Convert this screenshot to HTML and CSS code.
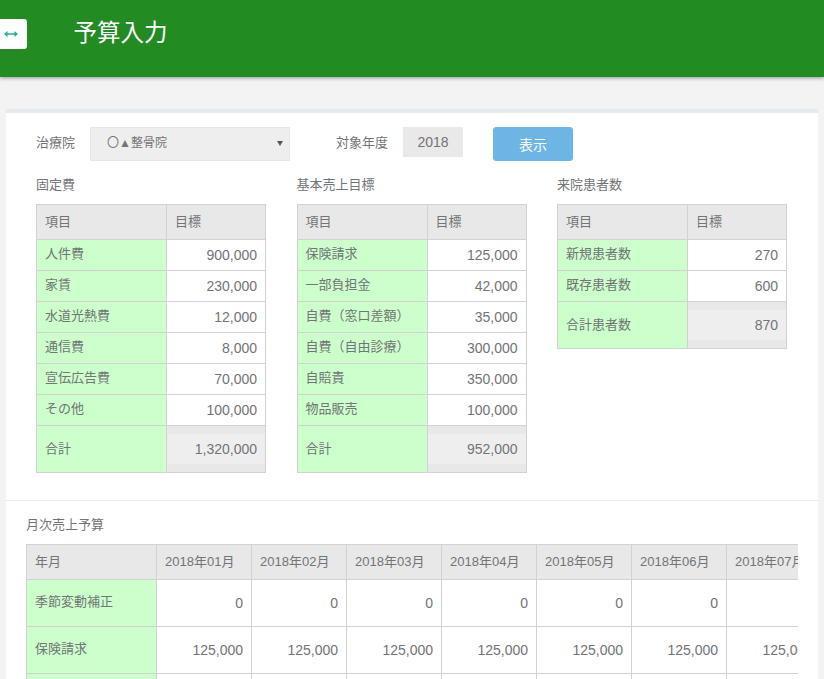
FILE: index.html
```html
<!DOCTYPE html>
<html lang="ja">

<head>
    <meta charset="UTF-8">
    <meta name="viewport" content="width=device-width, initial-scale=1.0">
    <title>予算入力</title>
    <link rel="stylesheet" href="styles.css">
</head>

<body>

    <header class="topbar">
        <button class="toggle" type="button" aria-label="toggle">
            <svg width="14" height="6" viewBox="0 0 14 6">
                <path d="M3 3h8" stroke="#1ab394" stroke-width="1.500" fill="none"/>
                <path d="M0 3L3.500 0V6ZM14 3L10.500 0V6Z" fill="#1ab394"/>
            </svg>
        </button>
        <h1 class="page-title">予算入力</h1>
    </header>

    <div class="card">
        <section class="upper">
            <div class="filter">
                <label class="filter-label">治療院</label>
                <div class="select-box">〇▲整骨院</div>
                <label class="filter-label year-label">対象年度</label>
                <div class="year-box">2018</div>
                <button class="show-btn" type="button">表示</button>
            </div>

            <div class="tables">
                <div>
                    <h2 class="table-title">固定費</h2>
                    <table class="budget">
                        <tr><th>項目</th><th>目標</th></tr>
                        <tr><td class="name">人件費</td><td class="num">900,000</td></tr>
                        <tr><td class="name">家賃</td><td class="num">230,000</td></tr>
                        <tr><td class="name">水道光熱費</td><td class="num">12,000</td></tr>
                        <tr><td class="name">通信費</td><td class="num">8,000</td></tr>
                        <tr><td class="name">宣伝広告費</td><td class="num">70,000</td></tr>
                        <tr><td class="name">その他</td><td class="num">100,000</td></tr>
                        <tr class="total"><td class="name">合計</td><td class="sum"><div>1,320,000</div></td></tr>
                    </table>
                </div>
                <div>
                    <h2 class="table-title">基本売上目標</h2>
                    <table class="budget">
                        <tr><th>項目</th><th>目標</th></tr>
                        <tr><td class="name">保険請求</td><td class="num">125,000</td></tr>
                        <tr><td class="name">一部負担金</td><td class="num">42,000</td></tr>
                        <tr><td class="name">自費（窓口差額）</td><td class="num">35,000</td></tr>
                        <tr><td class="name">自費（自由診療）</td><td class="num">300,000</td></tr>
                        <tr><td class="name">自賠責</td><td class="num">350,000</td></tr>
                        <tr><td class="name">物品販売</td><td class="num">100,000</td></tr>
                        <tr class="total"><td class="name">合計</td><td class="sum"><div>952,000</div></td></tr>
                    </table>
                </div>
                <div>
                    <h2 class="table-title">来院患者数</h2>
                    <table class="budget">
                        <tr><th>項目</th><th>目標</th></tr>
                        <tr><td class="name">新規患者数</td><td class="num">270</td></tr>
                        <tr><td class="name">既存患者数</td><td class="num">600</td></tr>
                        <tr class="total"><td class="name">合計患者数</td><td class="sum"><div>870</div></td></tr>
                    </table>
                </div>
            </div>
        </section>

        <section class="lower">
            <h2 class="table-title">月次売上予算</h2>
            <div class="scroll">
                <table class="monthly">
                    <tr>
                        <th>年月</th><th>2018年01月</th><th>2018年02月</th><th>2018年03月</th><th>2018年04月</th>
                        <th>2018年05月</th><th>2018年06月</th><th>2018年07月</th>
                    </tr>
                    <tr>
                        <td class="name">季節変動補正</td><td class="num">0</td><td class="num">0</td><td class="num">0</td>
                        <td class="num">0</td><td class="num">0</td><td class="num">0</td><td class="num">0</td>
                    </tr>
                    <tr>
                        <td class="name">保険請求</td><td class="num">125,000</td><td class="num">125,000</td><td class="num">125,000</td>
                        <td class="num">125,000</td><td class="num">125,000</td><td class="num">125,000</td><td class="num">125,000</td>
                    </tr>
                    <tr>
                        <td class="name">一部負担金</td><td class="num">42,000</td><td class="num">42,000</td><td class="num">42,000</td>
                        <td class="num">42,000</td><td class="num">42,000</td><td class="num">42,000</td><td class="num">42,000</td>
                    </tr>
                </table>
            </div>
        </section>
    </div>

</body>

</html>
```

FILE: styles.css
```css
* {
    margin: 0;
    padding: 0;
    box-sizing: border-box;
}

html,
body {
    height: 679px;
    overflow: hidden;
}

body {
    background-color: #f3f3f4;
    color: #727476;
    font-family: "Liberation Sans", "Noto Sans CJK JP", sans-serif;
    font-size: 13px;
}

.topbar {
    height: 77px;
    background-color: #228b22;
    box-shadow: 0 1px 4px rgba(0, 0, 0, 0.4);
    display: flex;
    align-items: flex-start;
}

.toggle {
    width: 27px;
    height: 30px;
    margin-top: 19px;
    background-color: #fff;
    border: 0;
    border-radius: 0 3px 3px 0;
    display: flex;
    align-items: center;
    justify-content: center;
    padding-right: 5px;
}

.page-title {
    margin: 18px 0 0 46.500px;
    color: #fff;
    font-size: 23.500px;
    font-weight: 400;
    line-height: 30px;
}

.card {
    margin: 32px 6px 0;
    background-color: #fff;
    border-top: 4px solid #e7eaec;
}

.upper {
    padding: 14px 30px 27px;
    border-bottom: 1px solid #e7eaec;
}

.filter {
    display: flex;
    align-items: flex-start;
}

.filter-label {
    width: 54px;
    line-height: 32px;
}

.select-box {
    position: relative;
    width: 200px;
    height: 34px;
    padding-left: 16px;
    font-size: 12px;
    line-height: 31px;
    background-color: #eee;
    border: 1px solid #e5e6e7;
}

.select-box::after {
    content: "";
    position: absolute;
    right: 6px;
    top: 13px;
    border-left: 3px solid transparent;
    border-right: 3px solid transparent;
    border-top: 5px solid #555;
}

.year-label {
    width: 67px;
    margin-left: 46px;
}

.year-box {
    width: 60px;
    height: 30px;
    background-color: #e9e9e9;
    font-size: 14px;
    line-height: 30px;
    text-align: center;
}

.show-btn {
    width: 80px;
    height: 34px;
    margin-left: 30px;
    background-color: #6cb6e6;
    border: 1px solid #6cb6e6;
    border-radius: 3px;
    color: #fff;
    font-family: inherit;
    font-size: 14px;
}

.tables {
    display: grid;
    grid-template-columns: repeat(3, 230px);
    column-gap: 30.500px;
    align-items: start;
    margin-top: 14px;
}

.table-title {
    height: 29px;
    font-size: 13px;
    font-weight: 400;
    line-height: 20px;
}

table {
    border-collapse: collapse;
    table-layout: fixed;
}

th,
td {
    border: 1px solid #d2d2d2;
}

th {
    height: 35px;
    padding: 0 8px 3px;
    background-color: #e8e8e8;
    font-weight: 400;
    text-align: left;
}

.name {
    padding: 0 8px 6px;
    background-color: #ccffcc;
}

.total .name {
    padding-bottom: 4px;
}

.num {
    padding: 0 8px;
    font-size: 14px;
    text-align: right;
}

.budget {
    width: 230px;
}

.budget th:first-child {
    width: 130px;
}

.budget tr {
    height: 31px;
}

.budget .total {
    height: 47px;
}

.sum {
    padding: 8px 0;
    background-color: #e8e8e8;
    font-size: 14px;
    text-align: right;
}

.sum div {
    padding-right: 8px;
    background-color: #eee;
    line-height: 30px;
}

.lower {
    padding: 14px 20px 0;
}

.scroll {
    overflow: hidden;
}

.monthly {
    width: 795px;
    white-space: nowrap;
}

.monthly th {
    width: 95px;
}

.monthly th:first-child {
    width: 130px;
}

.monthly td {
    height: 47px;
}
```
